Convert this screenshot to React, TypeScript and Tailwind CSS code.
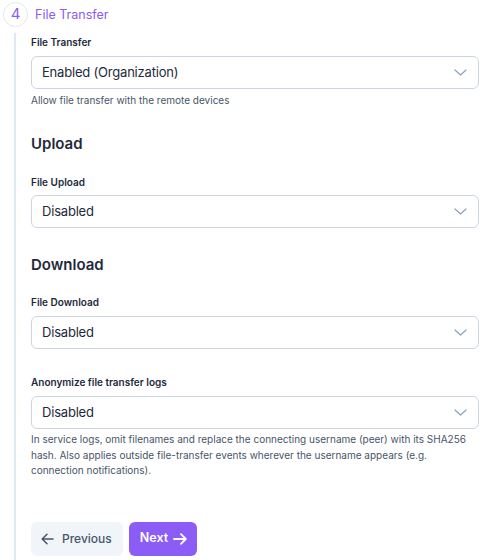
import React from "react";

function Chevron() {
  return (
    <svg width="13" height="7" viewBox="0 0 13 7" fill="none" className="text-slate-400">
      <path d="M1 1L6.5 6L12 1" stroke="currentColor" strokeWidth="1.2" strokeLinecap="round" strokeLinejoin="round" />
    </svg>
  );
}

function Select({ value }: { value: string }) {
  return (
    <div className="flex h-[33px] w-full items-center justify-between rounded-md border border-[#cbd5e1] bg-white pl-[10px] pr-[11px]">
      <span className="text-[13px] tracking-[-0.2px] text-[#1e293b]">{value}</span>
      <Chevron />
    </div>
  );
}

function Label({ children, className = "" }: { children: React.ReactNode; className?: string }) {
  return (
    <div className={`text-[10px] font-semibold leading-[16px] text-[#1e293b] ${className}`}>{children}</div>
  );
}

export default function App() {
  return (
    <div className="h-[560px] w-[485px] overflow-hidden bg-white" style={{ fontFamily: "Inter, 'Noto Sans', sans-serif" }}>
      <div className="flex items-center gap-[7px] pl-[3px] pt-[2px]">
        <div className="flex h-[25px] w-[25px] items-center justify-center rounded-full border border-[#e2e8f0] text-[15px] text-[#8b5cf6]">
          4
        </div>
        <div className="text-[12.5px] leading-[20px] text-[#8b5cf6]">File Transfer</div>
      </div>
      <div className="ml-[14px] mt-[6px] h-[600px] border-l-2 border-[#e2e8f0] pl-[15px] pr-[6px] pt-[1px]">
        <Label className="mb-[6px]">File Transfer</Label>
        <Select value="Enabled (Organization)" />
        <div className="mt-[3px] text-[10px] leading-[16px] text-[#475569]">Allow file transfer with the remote devices</div>

        <div className="mt-[24px] text-[15px] font-semibold leading-[24px] text-[#1e293b]">Upload</div>
        <Label className="mb-[5px] mt-[18px]">File Upload</Label>
        <Select value="Disabled" />

        <div className="mt-[25px] text-[15px] font-semibold leading-[24px] text-[#1e293b]">Download</div>
        <Label className="mb-[6px] mt-[17px]">File Download</Label>
        <Select value="Disabled" />

        <Label className="mb-[6px] mt-[25px]">Anonymize file transfer logs</Label>
        <Select value="Disabled" />
        <div className="mt-[3px] text-[10px] leading-[15.5px] text-[#475569]">
          In service logs, omit filenames and replace the connecting username (peer) with its SHA256 hash. Also applies outside file-transfer events wherever the username appears (e.g. connection notifications).
        </div>

        <div className="mt-[43px] flex gap-[6px]">
          <button className="flex h-[34px] items-center gap-[8px] rounded-md bg-[#f1f5f9] pl-[10px] pr-[11px] text-[12px] font-medium text-[#475569]">
            <svg width="13" height="12" viewBox="0 0 13 12" fill="none">
              <path d="M12 6H1.5M6 1.2L1.2 6L6 10.8" stroke="currentColor" strokeWidth="1.5" strokeLinecap="round" strokeLinejoin="round" />
            </svg>
            Previous
          </button>
          <button className="flex h-[34px] items-center gap-[5px] rounded-md bg-[#8b5cf6] pl-[11px] pr-[10px] text-[12.5px] font-semibold text-white">
            Next
            <svg width="14" height="12" viewBox="0 0 14 12" fill="none">
              <path d="M1 6H12.5M8 1.2L12.8 6L8 10.8" stroke="currentColor" strokeWidth="1.8" strokeLinecap="round" strokeLinejoin="round" />
            </svg>
          </button>
        </div>
      </div>
    </div>
  );
}
